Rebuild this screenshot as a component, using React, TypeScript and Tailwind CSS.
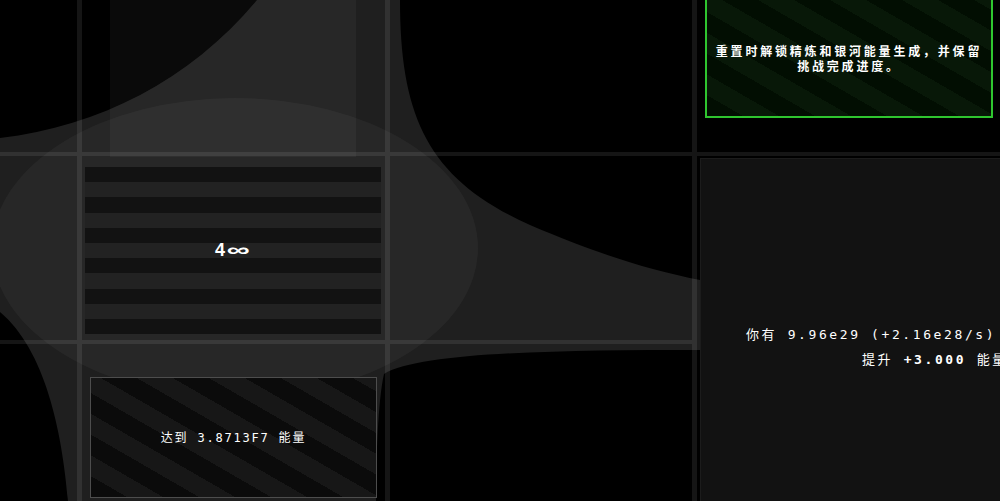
const mono = '"DejaVu Sans Mono", "Noto Sans CJK SC", monospace'
const cjk = '"Noto Sans CJK SC", "Noto Sans", sans-serif'

function Backdrop() {
	return (
		<svg
			className="pointer-events-none absolute inset-0 z-[5]"
			width="1000"
			height="501"
			viewBox="0 0 1000 501"
		>
			<path
				d="M0 138 C100 126 190 80 257 0 L400 0 C400 120 430 180 530 225 C600 255 650 270 700 280 L1000 320 L1000 350 L700 350 C560 350 420 352 384 374 C378 400 376 460 376 501 L68 501 C62 430 45 350 0 312 Z"
				fill="#ffffff"
				fillOpacity="0.12"
			/>
			<ellipse cx="235" cy="248" rx="243" ry="150" fill="#ffffff" fillOpacity="0.04" />
		</svg>
	)
}

export default function App() {
	return (
		<div className="relative h-[501px] w-[1000px] overflow-hidden bg-black" style={{ fontFamily: mono }}>
			<Backdrop />
			<div className="grid h-full grid-cols-[77px_303px_302px_303px] grid-rows-[152px_184px_1fr] gap-x-[5px] gap-y-[4px] bg-[#151515]">
				{/* row 1 */}
				<div className="bg-black" />
				<div className="bg-black">
					<div className="relative z-10 ml-[28px] h-[157px] w-[246px] bg-white/[0.04]" />
				</div>
				<div className="bg-black" />
				<div className="bg-black">
					<div className="relative z-10 ml-[8px] mr-[7px] flex h-[118px] items-center justify-center border-2 border-t-0 border-[#2fc52f] bg-[repeating-linear-gradient(30deg,#020e02_0px,#020e02_18px,#081808_18px,#081808_36px)]">
						<p
							className="text-center font-semibold text-[12px] leading-[15px] tracking-[2.8px] text-white"
							style={{ fontFamily: cjk }}
						>
							<span className="block">重置时解锁精炼和银河能量生成，并保留</span>
							<span className="block">挑战完成进度。</span>
						</p>
					</div>
				</div>

				{/* row 2 */}
				<div className="bg-black" />
				<div className="bg-black">
					<div className="relative z-10 mt-[11px] ml-[3px] flex h-[167px] w-[296px] items-center justify-center bg-[repeating-linear-gradient(to_bottom,#121212_0px,#121212_15.2px,#222222_15.2px,#222222_30.4px)]">
						<span
							className="font-bold text-[18px] text-white"
							style={{ fontFamily: '"Liberation Sans", "DejaVu Sans", sans-serif' }}
						>
							4<span className="mr-[6px] ml-[7px] inline-block scale-x-[1.8]">∞</span>
						</span>
					</div>
				</div>
				<div className="bg-black" />
				<div className="row-span-2 bg-black">
					<div className="relative z-10 mt-[2px] ml-[3px] h-[400px] w-[320px] border border-[#1c1c1c] bg-[#121212] pt-[166px] text-[13px] leading-[20px] tracking-[2.6px] text-white whitespace-nowrap">
						<div className="ml-[45px]">你有 9.96e29 (+2.16e28/s)</div>
						<div className="mt-[5px] ml-[161px]">
							提升 <span className="font-bold">+3.000</span> 能量
						</div>
					</div>
				</div>

				{/* row 3 */}
				<div className="bg-black" />
				<div className="bg-black">
					<div className="relative z-10 mt-[33px] mx-[8px] flex h-[121px] items-center justify-center border-[1.5px] border-[#4d4d4d] bg-[repeating-linear-gradient(30deg,#0b0b0b_0px,#0b0b0b_18px,#171717_18px,#171717_36px)]">
						<span className="text-[12px] tracking-[1.8px] text-white">达到 3.8713F7 能量</span>
					</div>
				</div>
				<div className="bg-black" />
			</div>
		</div>
	)
}
